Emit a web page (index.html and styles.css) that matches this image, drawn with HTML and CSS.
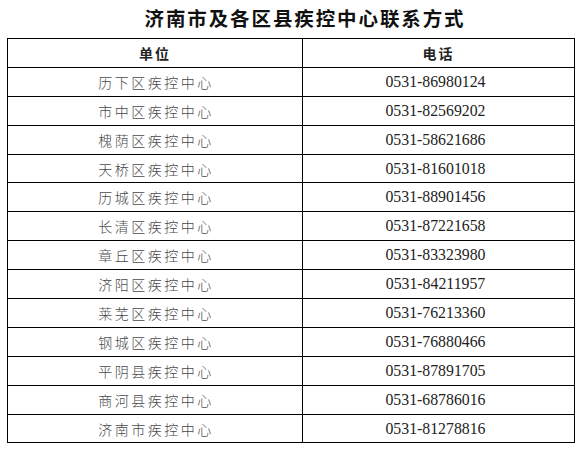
FILE: index.html
```html
<!DOCTYPE html>
<html lang="zh-CN">
<head>
<meta charset="utf-8">
<title>济南市及各区县疾控中心联系方式</title>
<link rel="stylesheet" href="styles.css">
</head>
<body>
<div class="page">
  <h1 class="title">济南市及各区县疾控中心联系方式</h1>
  <table class="contacts">
    <thead>
      <tr><th class="unit">单位</th><th class="phone">电话</th></tr>
    </thead>
    <tbody>
      <tr><td class="unit">历下区疾控中心</td><td class="phone">0531-86980124</td></tr>
      <tr><td class="unit">市中区疾控中心</td><td class="phone">0531-82569202</td></tr>
      <tr><td class="unit">槐荫区疾控中心</td><td class="phone">0531-58621686</td></tr>
      <tr><td class="unit">天桥区疾控中心</td><td class="phone">0531-81601018</td></tr>
      <tr><td class="unit">历城区疾控中心</td><td class="phone">0531-88901456</td></tr>
      <tr><td class="unit">长清区疾控中心</td><td class="phone">0531-87221658</td></tr>
      <tr><td class="unit">章丘区疾控中心</td><td class="phone">0531-83323980</td></tr>
      <tr><td class="unit">济阳区疾控中心</td><td class="phone">0531-84211957</td></tr>
      <tr><td class="unit">莱芜区疾控中心</td><td class="phone">0531-76213360</td></tr>
      <tr><td class="unit">钢城区疾控中心</td><td class="phone">0531-76880466</td></tr>
      <tr><td class="unit">平阴县疾控中心</td><td class="phone">0531-87891705</td></tr>
      <tr><td class="unit">商河县疾控中心</td><td class="phone">0531-68786016</td></tr>
      <tr><td class="unit">济南市疾控中心</td><td class="phone">0531-81278816</td></tr>
    </tbody>
  </table>
</div>
</body>
</html>
```
FILE: styles.css
```css
html, body {
  margin: 0;
  padding: 0;
  background: #fff;
}
.page {
  padding: 0 0 0 7px;
  width: 568px;
}
.title {
  margin: 0;
  height: 38px;
  line-height: 36px;
  padding-left: 28px;
  text-align: center;
  font-family: "Noto Sans CJK SC", sans-serif;
  font-size: 19.5px;
  font-weight: 700;
  letter-spacing: 1.9px;
  color: #111;
}
.contacts {
  width: 568px;
  border-collapse: collapse;
  border: 1.5px solid #000;
  table-layout: fixed;
}
.contacts th,
.contacts td {
  border: 1.5px solid #000;
  height: 27.9px;
  padding: 0;
  text-align: center;
  vertical-align: middle;
}
.contacts .unit {
  width: 294px;
}
.contacts th {
  font-family: "Noto Sans CJK SC", sans-serif;
  font-size: 14px;
  font-weight: 700;
  letter-spacing: 2px;
  color: #222;
}
.contacts td.unit {
  font-family: "Noto Sans CJK SC", sans-serif;
  font-size: 14px;
  font-weight: 300;
  letter-spacing: 2.5px;
  color: #4a4a4a;
  padding-left: 2px;
}
.contacts td.phone {
  font-family: "Liberation Serif", serif;
  font-size: 15.8px;
  color: #222;
  padding-right: 6px;
}
```
